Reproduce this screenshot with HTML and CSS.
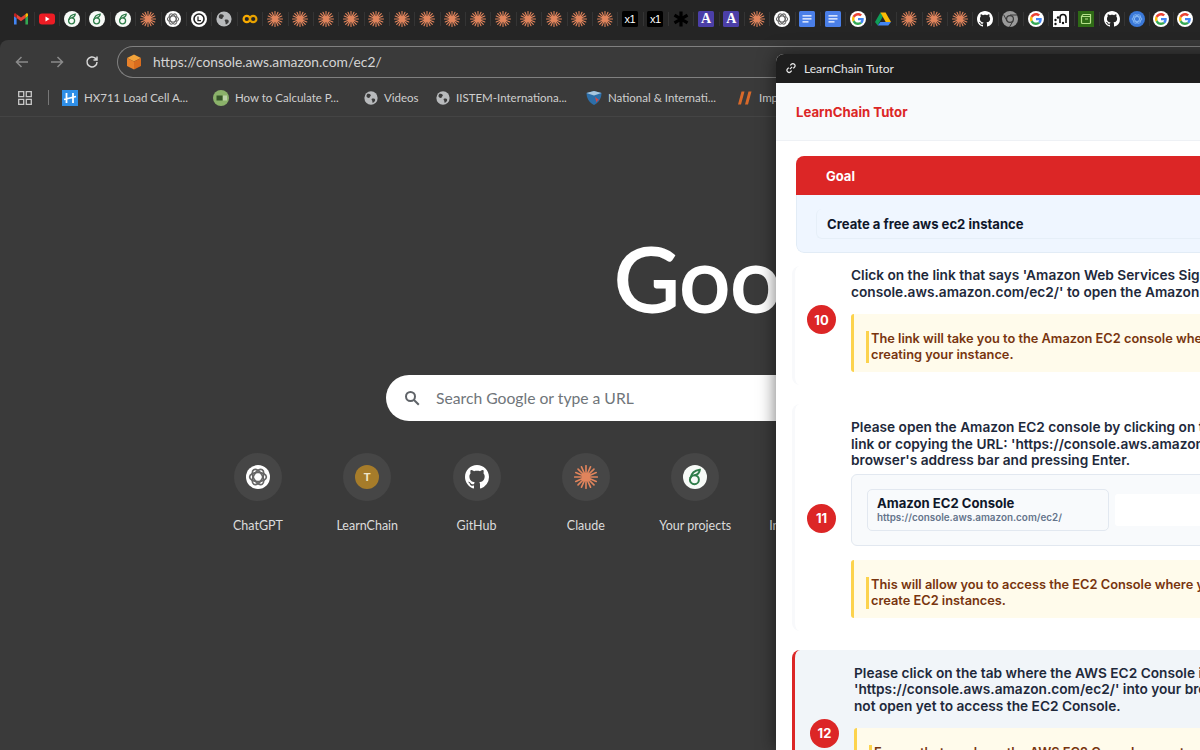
FILE: index.html
```html
<!DOCTYPE html>
<html lang="en">
<head>
<meta charset="utf-8">
<title>New Tab</title>
<link rel="stylesheet" href="styles.css">
</head>
<body>
<svg class="sprite" xmlns="http://www.w3.org/2000/svg">
  <symbol id="i-gmail" viewBox="0 0 16 16">
    <path fill="#4285f4" d="M1 13.5h2.6V7L1 5z"/><path fill="#34a853" d="M12.4 13.5H15V5l-2.6 2z"/>
    <path fill="#ea4335" d="M3.6 7V3.2L8 6.6l4.4-3.4V7L8 10.2z"/><path fill="#fbbc04" d="M12.4 3.2 13.2 2.6c.8-.6 1.8 0 1.8 1V5l-2.6 2z"/><path fill="#c5221f" d="M1 5V3.6c0-1 1-1.6 1.8-1l.8.6V7z"/>
  </symbol>
  <symbol id="i-yt" viewBox="0 0 16 16"><rect y="2.4" width="16" height="11.2" rx="3" fill="#ed1c24"/><path d="M6.5 5.6v4.8L10.6 8z" fill="#fff"/></symbol>
  <symbol id="i-lemon" viewBox="0 0 16 16"><circle cx="8" cy="8" r="8" fill="#f7faf7"/><circle cx="7.6" cy="9.8" r="3" fill="none" stroke="#2f7d4a" stroke-width="1.3"/><path d="M5 8.8C5.6 5.4 7.6 3.6 11.2 3.2 11 5.2 9.800 6.400 7.600 6.800" fill="none" stroke="#2f7d4a" stroke-width="1.3"/></symbol>
  <symbol id="i-claude" viewBox="0 0 16 16"><circle cx="8" cy="8" r="2.400" fill="#e0845c"/><g stroke="#e0845c" stroke-width="1.100" stroke-linecap="round"><path d="M8 8V.5M8 8v7.500M8 8H.5M8 8h7.500M8 8 2.700 2.700M8 8l5.300-5.300M8 8l-5.300 5.300M8 8l5.300 5.300M8 8 5 1.200M8 8l3-6.800M8 8 1.200 5M8 8l6.800-3M8 8l-6.800 3M8 8l6.800 3M8 8l-3 6.800M8 8l3 6.800"/></g></symbol>
  <symbol id="i-gpt" viewBox="0 0 16 16"><circle cx="8" cy="8" r="8" fill="#fff"/><g fill="none" stroke="#666" stroke-width="1.100"><ellipse cx="8" cy="8" rx="5.600" ry="3"/><ellipse cx="8" cy="8" rx="5.600" ry="3" transform="rotate(60 8 8)"/><ellipse cx="8" cy="8" rx="5.600" ry="3" transform="rotate(120 8 8)"/></g></symbol>
  <symbol id="i-ring" viewBox="0 0 16 16"><circle cx="8" cy="8" r="8" fill="#fff"/><circle cx="8" cy="8" r="5" fill="none" stroke="#222" stroke-width="1.6"/><path d="M7 5.5v4.2h3" fill="none" stroke="#222" stroke-width="1.2"/></symbol>
  <symbol id="i-globe" viewBox="0 0 16 16"><circle cx="8" cy="8" r="7.6" fill="#b8babc"/><path d="M4 3.2c2 0 3.4.4 3.8 1.6.3 1-1.2 1.2-1.2 2.4 0 1-2 .8-2.8.2C2.6 6.6 2.2 5 4 3.2zM9 8.8c1.6-.6 3.8 0 3.8 1.4 0 1.6-1.8 3-2.8 3.2-.8-.6-.2-1.6-.6-2.4-.4-.8-1.2-1.6-.4-2.2z" fill="#3b3b3b"/></symbol>
  <symbol id="i-colab" viewBox="0 0 16 16"><circle cx="4.8" cy="8" r="3.2" fill="none" stroke="#f9ab00" stroke-width="2.2"/><circle cx="11.2" cy="8" r="3.2" fill="none" stroke="#e8a200" stroke-width="2.2"/></symbol>
  <symbol id="i-star" viewBox="0 0 16 16"><g stroke="#000" stroke-width="3.2"><path d="M8 .5v15M1.5 4.2l13 7.6M14.5 4.2l-13 7.6"/></g></symbol>
  <symbol id="i-docs" viewBox="0 0 16 16"><rect width="16" height="16" rx="1.5" fill="#4a7fe8"/><path d="M3.5 4.2h9v1.3h-9zM3.5 7.2h9v1.3h-9zM3.5 10.2h6v1.3h-6z" fill="#fff"/></symbol>
  <symbol id="i-g" viewBox="-8 -8 64 64"><circle cx="24" cy="24" r="32" fill="#fff"/><path fill="#EA4335" d="M24 9.5c3.54 0 6.71 1.22 9.21 3.6l6.85-6.85C35.9 2.38 30.47 0 24 0 14.62 0 6.51 5.38 2.56 13.22l7.98 6.19C12.43 13.72 17.74 9.5 24 9.5z"/><path fill="#4285F4" d="M46.98 24.55c0-1.57-.15-3.09-.38-4.55H24v9.02h12.94c-.58 2.96-2.26 5.48-4.78 7.18l7.73 6c4.51-4.18 7.09-10.36 7.09-17.65z"/><path fill="#FBBC05" d="M10.53 28.59c-.48-1.45-.76-2.99-.76-4.59s.27-3.14.76-4.59l-7.98-6.19C.92 16.46 0 20.12 0 24c0 3.88.92 7.54 2.56 10.78l7.97-6.19z"/><path fill="#34A853" d="M24 48c6.48 0 11.93-2.13 15.89-5.81l-7.73-6c-2.15 1.45-4.92 2.3-8.16 2.3-6.26 0-11.57-4.22-13.47-9.91l-7.98 6.19C6.51 42.62 14.62 48 24 48z"/></symbol>
  <symbol id="i-drive" viewBox="0 0 16 16"><path fill="#0f9d58" d="M5.4 1.5 0 11l2.7 3.5L8 5.2z"/><path fill="#fbbc04" d="M5.4 1.5h5.2l5.4 9.5h-5.3z"/><path fill="#4285f4" d="M2.7 14.5h10.6L16 11H5.4z"/></symbol>
  <symbol id="i-github" viewBox="0 0 16 16"><path fill="#fff" d="M8 0C3.58 0 0 3.58 0 8c0 3.54 2.29 6.53 5.47 7.59.4.07.55-.17.55-.38 0-.19-.01-.82-.01-1.49-2.01.37-2.53-.49-2.69-.94-.09-.23-.48-.94-.82-1.13-.28-.15-.68-.52-.01-.53.63-.01 1.08.58 1.23.82.72 1.21 1.87.87 2.33.66.07-.52.28-.87.51-1.07-1.78-.2-3.64-.89-3.64-3.95 0-.87.31-1.59.82-2.15-.08-.2-.36-1.02.08-2.12 0 0 .67-.21 2.2.82.64-.18 1.32-.27 2-.27.68 0 1.36.09 2 .27 1.53-1.04 2.2-.82 2.2-.82.44 1.1.16 1.92.08 2.12.51.56.82 1.27.82 2.15 0 3.07-1.87 3.75-3.65 3.95.29.25.54.73.54 1.48 0 1.07-.01 1.93-.01 2.2 0 .21.15.46.55.38A8.013 8.013 0 0016 8c0-4.42-3.58-8-8-8z"/></symbol>
  <symbol id="i-chrome" viewBox="0 0 16 16"><circle cx="8" cy="8" r="8" fill="#9a9a9a"/><circle cx="8" cy="8" r="4" fill="#3a3a3a"/><circle cx="8" cy="8" r="2.800" fill="#9a9a9a"/><path d="M8 4h7M5 10 1.800 4M11 10l-3.500 6" stroke="#3a3a3a" stroke-width="1"/></symbol>
  <symbol id="i-sq" viewBox="0 0 16 16"><rect width="16" height="16" fill="#fff"/><path d="M7 12V6.5a3 3 0 0 1 6 0V12" fill="none" stroke="#111" stroke-width="1.6"/><circle cx="2.5" cy="9" r="1.2" fill="#111"/><circle cx="5" cy="6.5" r="1.2" fill="#111"/><circle cx="2.5" cy="13" r="1.2" fill="#111"/><circle cx="10" cy="12" r="1.2" fill="#111"/></symbol>
  <symbol id="i-green" viewBox="0 0 16 16"><rect width="16" height="16" fill="#2f6b16"/><path d="M3.5 5.5 5 3.5h7.5v8a1 1 0 0 1-1 1h-7a1 1 0 0 1-1-1z" fill="none" stroke="#b6e08a" stroke-width="1.2"/><path d="M3.5 5.5h9M7 8h3" stroke="#b6e08a" stroke-width="1.2"/></symbol>
  <symbol id="i-blue" viewBox="0 0 16 16"><circle cx="8" cy="8" r="8" fill="#3a78d8"/><g fill="none" stroke="#8fc0f8" stroke-width=".8"><ellipse cx="8" cy="8" rx="4.8" ry="2.4"/><ellipse cx="8" cy="8" rx="4.8" ry="2.4" transform="rotate(60 8 8)"/><ellipse cx="8" cy="8" rx="4.8" ry="2.4" transform="rotate(120 8 8)"/></g></symbol>
  <symbol id="i-cube" viewBox="0 0 16 16"><path fill="#f2a33a" d="M8 .5 15 4 8 7.6 1 4z"/><path fill="#e8812a" d="M1 4v8l7 3.6V7.6z"/><path fill="#d96c1e" d="M15 4v8l-7 3.6V7.6z"/></symbol>
  <symbol id="i-hx" viewBox="0 0 16 16"><rect width="16" height="16" fill="#2f8fe8"/><path d="M4.5 3v10M11 3v10M2 9.5l12-3" stroke="#fff" stroke-width="1.8"/></symbol>
  <symbol id="i-how" viewBox="0 0 16 16"><circle cx="8" cy="8" r="8" fill="#8bb26a"/><rect x="3.5" y="5.5" width="6" height="5" fill="#37562a"/><path d="M11 5.5v5M13 5.5v5" stroke="#eef5e6" stroke-width="1"/></symbol>
  <symbol id="i-shield" viewBox="0 0 16 16"><path d="M.5 3 8 1l7.500 2c0 5-2.500 9.500-7.500 12C3 12.500.5 8 .5 3z" fill="#2d6ea8"/><path d="M.5 3 8 1l7.500 2L8 5.500z" fill="#a8c6de"/><path d="m9 7 4 3-1.500.5-1 2z" fill="#d94545"/></symbol>
  <symbol id="i-slash" viewBox="0 0 16 16"><path d="M4.500 1.500h3L4 14.500H1zM11.500 1.500h3L11 14.500H8z" fill="#d8692a"/></symbol>
</svg>

<div class="browser">
  <div class="tabstrip">
    <span class="tab"><svg class="ic"><use href="#i-gmail"/></svg></span>
    <span class="tab"><svg class="ic"><use href="#i-yt"/></svg></span>
    <span class="tab"><svg class="ic"><use href="#i-lemon"/></svg></span>
    <span class="tab"><svg class="ic"><use href="#i-lemon"/></svg></span>
    <span class="tab"><svg class="ic"><use href="#i-lemon"/></svg></span>
    <span class="tab"><svg class="ic"><use href="#i-claude"/></svg></span>
    <span class="tab"><svg class="ic"><use href="#i-gpt"/></svg></span>
    <span class="tab"><svg class="ic"><use href="#i-ring"/></svg></span>
    <span class="tab"><svg class="ic"><use href="#i-globe"/></svg></span>
    <span class="tab"><svg class="ic"><use href="#i-colab"/></svg></span>
    <span class="tab"><svg class="ic"><use href="#i-claude"/></svg></span>
    <span class="tab"><svg class="ic"><use href="#i-claude"/></svg></span>
    <span class="tab"><svg class="ic"><use href="#i-claude"/></svg></span>
    <span class="tab"><svg class="ic"><use href="#i-claude"/></svg></span>
    <span class="tab"><svg class="ic"><use href="#i-claude"/></svg></span>
    <span class="tab"><svg class="ic"><use href="#i-claude"/></svg></span>
    <span class="tab"><svg class="ic"><use href="#i-claude"/></svg></span>
    <span class="tab"><svg class="ic"><use href="#i-claude"/></svg></span>
    <span class="tab"><svg class="ic"><use href="#i-claude"/></svg></span>
    <span class="tab"><svg class="ic"><use href="#i-claude"/></svg></span>
    <span class="tab"><svg class="ic"><use href="#i-claude"/></svg></span>
    <span class="tab"><svg class="ic"><use href="#i-claude"/></svg></span>
    <span class="tab"><svg class="ic"><use href="#i-claude"/></svg></span>
    <span class="tab"><svg class="ic"><use href="#i-claude"/></svg></span>
    <span class="tab"><span class="glyph glyph-x">x1</span></span>
    <span class="tab"><span class="glyph glyph-x">x1</span></span>
    <span class="tab"><svg class="ic"><use href="#i-star"/></svg></span>
    <span class="tab"><span class="glyph glyph-a">A</span></span>
    <span class="tab"><span class="glyph glyph-a">A</span></span>
    <span class="tab"><svg class="ic"><use href="#i-claude"/></svg></span>
    <span class="tab"><svg class="ic"><use href="#i-gpt"/></svg></span>
    <span class="tab"><svg class="ic"><use href="#i-docs"/></svg></span>
    <span class="tab"><svg class="ic"><use href="#i-docs"/></svg></span>
    <span class="tab"><svg class="ic"><use href="#i-g"/></svg></span>
    <span class="tab"><svg class="ic"><use href="#i-drive"/></svg></span>
    <span class="tab"><svg class="ic"><use href="#i-claude"/></svg></span>
    <span class="tab"><svg class="ic"><use href="#i-claude"/></svg></span>
    <span class="tab"><svg class="ic"><use href="#i-claude"/></svg></span>
    <span class="tab"><svg class="ic"><use href="#i-github"/></svg></span>
    <span class="tab"><svg class="ic"><use href="#i-chrome"/></svg></span>
    <span class="tab"><svg class="ic"><use href="#i-g"/></svg></span>
    <span class="tab"><svg class="ic"><use href="#i-sq"/></svg></span>
    <span class="tab"><svg class="ic"><use href="#i-green"/></svg></span>
    <span class="tab"><svg class="ic"><use href="#i-github"/></svg></span>
    <span class="tab tab-narrow"><svg class="ic"><use href="#i-blue"/></svg></span>
    <span class="tab tab-narrow"><svg class="ic"><use href="#i-g"/></svg></span>
    <span class="tab tab-narrow"><svg class="ic"><use href="#i-g"/></svg></span>
  </div>

  <div class="window">
    <div class="toolbar">
      <svg class="nav nav-off" viewBox="0 0 16 16"><path d="M14 8H2.500M7.500 3l-5 5 5 5"/></svg>
      <svg class="nav nav-off" viewBox="0 0 16 16"><path d="M2 8h11.500M8.500 3l5 5-5 5"/></svg>
      <svg class="nav" viewBox="0 0 16 16"><path d="M13 8a5 5 0 1 1-1.500-3.600L13 6M13 2.500V6H9.500"/></svg>
      <div class="omnibox">
        <svg class="ic"><use href="#i-cube"/></svg>
        <span class="url">https://console.aws.amazon.com/ec2/</span>
      </div>
    </div>

    <div class="bookmarks">
      <svg class="apps" viewBox="0 0 14 14"><path d="M.7.7h5v5h-5zM8.300.7h5v5h-5zM.7 8.300h5v5h-5zM8.300 8.300h5v5h-5z"/></svg>
      <span class="bm-sep"></span>
      <div class="bm-list">
        <span class="bm"><svg class="ic"><use href="#i-hx"/></svg>HX711 Load Cell A...</span>
        <span class="bm"><svg class="ic"><use href="#i-how"/></svg>How to Calculate P...</span>
        <span class="bm"><svg class="ic ic-sm"><use href="#i-globe"/></svg>Videos</span>
        <span class="bm"><svg class="ic ic-sm"><use href="#i-globe"/></svg>IISTEM-Internationa...</span>
        <span class="bm"><svg class="ic"><use href="#i-shield"/></svg>National &amp; Internati...</span>
        <span class="bm"><svg class="ic"><use href="#i-slash"/></svg>Important</span>
      </div>
    </div>

    <main class="ntp">
      <div class="logo">Google</div>
      <div class="search">
        <svg class="search-ic" viewBox="0 0 16 16"><circle cx="6.500" cy="6.500" r="4.500"/><path d="m10 10 4.800 4.800"/></svg>
        <span>Search Google or type a URL</span>
      </div>
      <div class="shortcuts">
        <div class="sc"><span class="sc-ic"><svg class="ic-lg"><use href="#i-gpt"/></svg></span><span>ChatGPT</span></div>
        <div class="sc"><span class="sc-ic"><span class="glyph-t">T</span></span><span>LearnChain</span></div>
        <div class="sc"><span class="sc-ic"><svg class="ic-lg"><use href="#i-github"/></svg></span><span>GitHub</span></div>
        <div class="sc"><span class="sc-ic"><svg class="ic-lg"><use href="#i-claude"/></svg></span><span>Claude</span></div>
        <div class="sc"><span class="sc-ic"><svg class="ic-lg"><use href="#i-lemon"/></svg></span><span>Your projects</span></div>
        <div class="sc"><span class="sc-ic"></span><span>Instructables</span></div>
      </div>
    </main>
  </div>
</div>

<aside class="panel">
  <div class="panel-title">
    <svg class="link-ic" viewBox="0 0 16 16"><path d="M6.500 9.500l3-3M7 4.500l1.500-1.500a2.800 2.800 0 0 1 4 4L11 8.500M9 11.500 7.500 13a2.800 2.800 0 0 1-4-4L5 7.500"/></svg>
    <span>LearnChain Tutor</span>
  </div>
  <div class="brand">LearnChain Tutor</div>
  <div class="panel-body">
    <section class="goal">
      <div class="goal-head">Goal</div>
      <div class="goal-body"><div class="goal-text">Create a free aws ec2 instance</div></div>
    </section>

    <section class="step step-first">
      <span class="badge">10</span>
      <div class="step-main">
        <p class="step-text">Click on the link that says 'Amazon Web Services Sign-In' or navigate to 'https://<br>console.aws.amazon.com/ec2/' to open the Amazon EC2 console.</p>
        <div class="note"><p>The link will take you to the Amazon EC2 console where you can start<br>creating your instance.</p></div>
      </div>
    </section>

    <section class="step step-links">
      <span class="badge">11</span>
      <div class="step-main">
        <p class="step-text">Please open the Amazon EC2 console by clicking on the provided<br>link or copying the URL: 'https://console.aws.amazon.com/ec2/' into your<br>browser's address bar and pressing Enter.</p>
        <div class="links">
          <div class="link-card">
            <div class="link-title">Amazon EC2 Console</div>
            <div class="link-url">https://console.aws.amazon.com/ec2/</div>
          </div>
          <div class="link-blank"></div>
        </div>
        <div class="note"><p>This will allow you to access the EC2 Console where you can<br>create EC2 instances.</p></div>
      </div>
    </section>

    <section class="step step-active">
      <span class="badge">12</span>
      <div class="step-main">
        <p class="step-text">Please click on the tab where the AWS EC2 Console is open or enter<br>'https://console.aws.amazon.com/ec2/' into your browser if it is<br>not open yet to access the EC2 Console.</p>
        <div class="note"><p>Ensure that you have the AWS EC2 Console open to continue<br>with the next steps of creating<br>your free instance.</p></div>
      </div>
    </section>
  </div>
</aside>
</body>
</html>
```
FILE: styles.css
```css
* { box-sizing: border-box; }
html, body { margin: 0; height: 100%; overflow: hidden; }
body { background: #3a3a3a; font-family: "Lato", "Open Sans", sans-serif; position: relative; }
.sprite { position: absolute; width: 0; height: 0; }
p { margin: 0; }

.browser { height: 750px; display: flex; flex-direction: column; background: #252525; }
.tabstrip { flex: 0 0 40px; display: flex; align-items: flex-start; padding: 11px 0 0 8.6px; }
.tab { flex: 0 0 25.37px; height: 16px; display: flex; align-items: center; justify-content: center; position: relative; }
.tab-narrow { flex-basis: 24.3px; }
.tab + .tab::before { content: ""; position: absolute; left: 0; top: 1px; height: 14px; width: 1px; background: rgba(255,255,255,.07); }
.ic { width: 16px; height: 16px; flex: none; }
.ic-sm { width: 14px; height: 14px; }
.ic-lg { width: 24px; height: 24px; }
.glyph { width: 16px; height: 16px; display: flex; align-items: center; justify-content: center; border-radius: 1.5px; flex: none; }
.glyph-x { background: #000; color: #fff; font-family: "Liberation Sans", sans-serif; font-size: 11px; letter-spacing: -.5px; }
.glyph-a { background: #4b3fa8; color: #fff; font-family: "Liberation Serif", serif; font-weight: 700; font-size: 14px; }
.glyph-t { width: 24px; height: 24px; border-radius: 50%; background: #a67c2a; color: #f2e6c8; font-family: "Inter", sans-serif; font-size: 11px; font-weight: 700; display: flex; align-items: center; justify-content: center; }

.window { flex: 1; background: #3a3a3a; border-radius: 8px 0 0 0; display: flex; flex-direction: column; min-height: 0; }
.toolbar { flex: 0 0 40px; display: flex; align-items: center; padding: 3px 0 0 14px; }
.nav { width: 16px; height: 16px; flex: none; margin-right: 19px; fill: none; stroke: #d8d8d8; stroke-width: 1.5; }
.nav-off { stroke: #8a8a8a; }
.nav:nth-child(3) { margin-right: 17px; }
.omnibox { flex: 1; height: 32px; border: 1px solid #808080; border-right: 0; border-radius: 16px 0 0 16px; display: flex; align-items: center; padding-left: 8px; gap: 11px; background: #3a3a3a; }
.url { color: #d4d4d4; font-size: 13.8px; }

.bookmarks { flex: 0 0 37px; display: flex; align-items: center; padding: 0 0 1px 18px; border-bottom: 1px solid #444; }
.apps { width: 14px; height: 14px; flex: none; fill: none; stroke: #c8c8c8; stroke-width: 1.3; }
.bm-sep { width: 1px; height: 15px; background: #777; margin: 0 13px 0 16px; flex: none; }
.bm-list { display: grid; grid-template-columns: 151px 151px 72px 150px 151px 1fr; flex: 1; min-width: 0; overflow: hidden; }
.bm { display: flex; align-items: center; gap: 6px; color: #cfcfcf; font-size: 11.5px; white-space: nowrap; }

.ntp { flex: 1; width: 776px; position: relative; min-height: 0; overflow: hidden; }
.logo { padding: 105px 0 0 614px; height: 258px; color: #fff; font-family: "Lato", sans-serif; font-size: 90px; line-height: 110px; white-space: nowrap; -webkit-text-stroke: 2px #fff; }
.search { width: 560px; height: 46px; margin-left: 386px; background: #fff; border-radius: 23px; display: flex; align-items: center; padding-left: 18px; gap: 16px; color: #70757a; font-size: 15.7px; }
.search-ic { width: 16px; height: 16px; fill: none; stroke: #5f6368; stroke-width: 2; flex: none; }
.shortcuts { display: flex; padding: 32px 0 0 203.300px; }
.sc { flex: 0 0 109.300px; display: flex; flex-direction: column; align-items: center; gap: 17px; color: #dcdcdc; font-size: 12.500px; white-space: nowrap; }
.sc-ic { width: 48px; height: 48px; border-radius: 50%; background: #464646; display: flex; align-items: center; justify-content: center; }

.panel { position: absolute; left: 776px; top: 54px; width: 640px; height: 696px; background: #fff; border-radius: 8px 0 0 0; overflow: hidden; box-shadow: 0 0 18px rgba(0,0,0,.55); font-family: "Inter", sans-serif; }
.panel-title { height: 29px; background: #1e1e1e; color: #e6e6e6; display: flex; align-items: center; gap: 7px; padding: 0 0 1px 9px; font-family: "Lato", sans-serif; font-size: 12px; }
.link-ic { width: 12px; height: 12px; fill: none; stroke: #e6e6e6; stroke-width: 1.600; flex: none; }
.brand { height: 58px; background: #f8fafc; border-bottom: 1px solid #eef1f5; display: flex; align-items: center; padding-left: 20px; color: #dc2626; font-size: 13.200px; font-weight: 700; }
.panel-body { padding: 15px 0 0 16px; display: flex; flex-direction: column; gap: 19px; }

.goal { margin: 0 0 -6px 4px; border-radius: 8px; overflow: hidden; }
.goal-head { height: 39px; background: #dc2626; color: #fff; font-size: 13px; font-weight: 700; display: flex; align-items: center; padding-left: 30px; }
.goal-body { height: 58px; padding: 14px 0 0 19px; background: #eff6ff; border: 1px solid #e2ecf6; border-top: 0; border-radius: 0 0 8px 8px; }
.goal-text { height: 30px; padding-left: 10px; border-left: 1px solid #e6eff8; border-bottom: 1px solid #e6eff8; border-radius: 6px; color: #0f172a; font-size: 13.100px; font-weight: 700; line-height: 30px; }

.step { display: flex; align-items: center; gap: 15px; padding: 14px 0 14px 12px; border-left: 3px solid #f8f9fb; border-radius: 8px; white-space: nowrap; }
.step-first { padding: 1px 0 13px 12px; }
.step-links { padding: 15px 0 13px 12px; }
.step-active { border-left-color: #dc2626; background: #f1f5f9; padding: 15px 0 14px 15px; }
.badge { flex: none; width: 29px; height: 29px; border-radius: 50%; background: #dc2626; color: #fff; font-size: 13px; font-weight: 700; display: flex; align-items: center; justify-content: center; }
.step-main { flex: 1; display: flex; flex-direction: column; min-width: 0; }
.step-text { color: #1e293b; font-size: 13.700px; font-weight: 600; line-height: 16.500px; }

.note { margin-top: 14px; border-left: 3px solid #fcd34d; background: #fffbeb; padding: 17px 0 9px 12px; border-radius: 3px; }
.note p { border-left: 3px solid #fcd34d; padding-left: 2px; color: #78350f; font-size: 12.800px; font-weight: 600; line-height: 16px; }

.links { margin-top: 5px; height: 72px; border: 1px solid #e2e8f0; background: #f8fafc; border-radius: 6px; display: flex; align-items: center; gap: 6px; padding-left: 15px; }
.link-card { flex: 0 0 242px; height: 42px; border: 1px solid #e2e8f0; border-radius: 5px; background: #f8fafc; padding: 5px 0 0 9px; }
.link-title { color: #0f172a; font-size: 13.100px; font-weight: 700; line-height: 16px; }
.link-url { color: #64748b; font-size: 9.900px; font-weight: 600; line-height: 13px; }
.link-blank { flex: 1; height: 32px; background: #fff; border-radius: 3px; }
```
